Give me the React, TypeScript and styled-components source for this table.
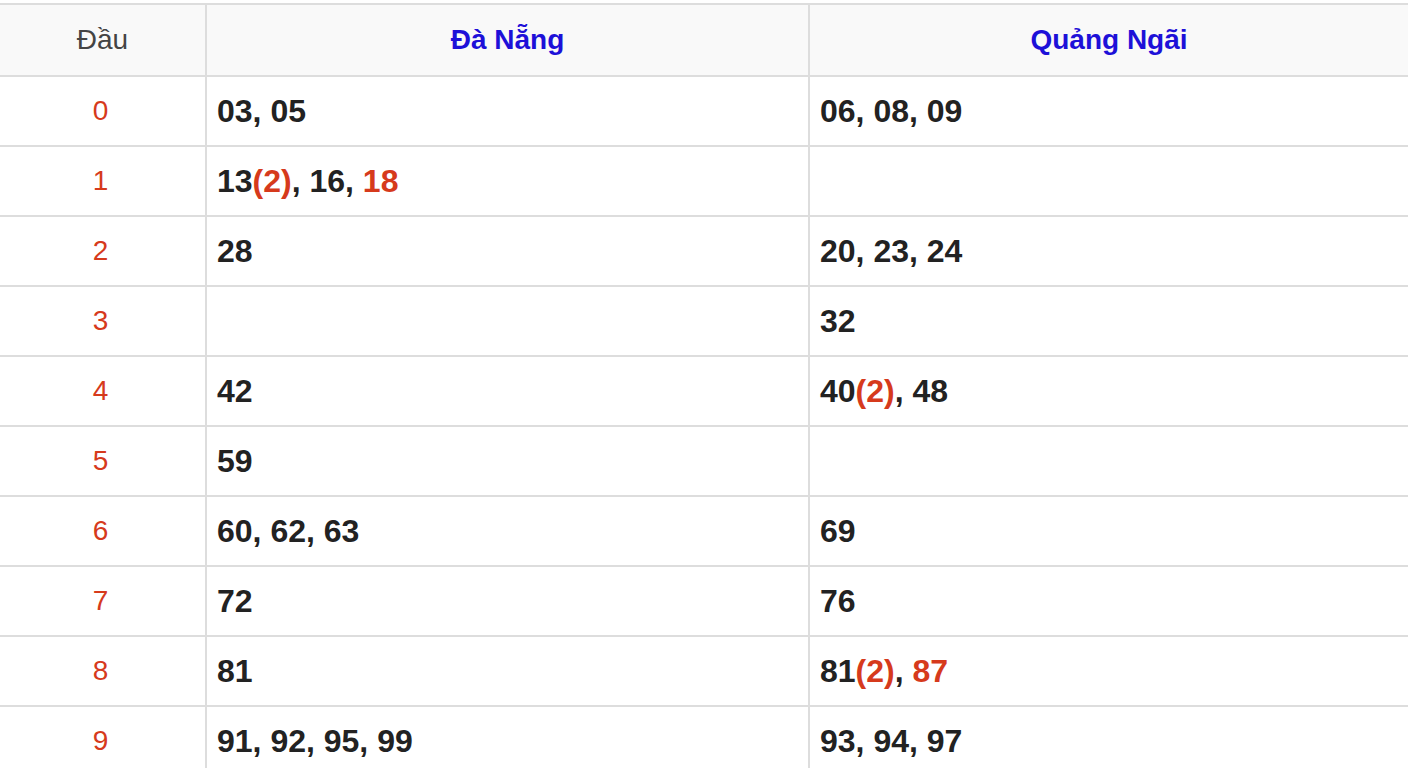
import React from "react";
import styled, { createGlobalStyle } from "styled-components";

const GlobalStyle = createGlobalStyle`
  html, body {
    margin: 0;
    padding: 0;
    background: #ffffff;
    font-family: "Liberation Sans", Arial, Helvetica, sans-serif;
  }
  *, *::before, *::after {
    box-sizing: border-box;
  }
`;

const Wrapper = styled.div`
  padding-top: 3px;
`;

const Table = styled.div`
  display: grid;
  grid-template-columns: 205px 603px 1fr;
  border-top: 2px solid #dddddd;
  width: 1408px;
`;

const HeadCell = styled.div<{ $first?: boolean; $accent?: boolean }>`
  height: 72px;
  display: flex;
  align-items: center;
  justify-content: center;
  background: #f9f9f9;
  border-bottom: 2px solid #dddddd;
  border-left: ${(p) => (p.$first ? "none" : "2px solid #dddddd")};
  font-size: 28px;
  font-weight: ${(p) => (p.$accent ? 700 : 400)};
  color: ${(p) => (p.$accent ? "#1d10d8" : "#444444")};
`;

const IndexCell = styled.div`
  height: 70px;
  display: flex;
  align-items: center;
  justify-content: center;
  border-bottom: 2px solid #dddddd;
  font-size: 28px;
  color: #d63a1c;
  padding-right: 4px;
`;

const NumCell = styled.div`
  height: 70px;
  display: flex;
  align-items: center;
  padding-left: 10px;
  border-left: 2px solid #dddddd;
  border-bottom: 2px solid #dddddd;
  font-size: 32px;
  font-weight: 700;
  color: #222222;
  white-space: pre;
`;

const Hot = styled.span`
  color: #d63a1c;
`;

type Item = { n: string; count?: number; hot?: boolean };

const rows: { head: number; dn: Item[]; qn: Item[] }[] = [
  { head: 0, dn: [{ n: "03" }, { n: "05" }], qn: [{ n: "06" }, { n: "08" }, { n: "09" }] },
  { head: 1, dn: [{ n: "13", count: 2 }, { n: "16" }, { n: "18", hot: true }], qn: [] },
  { head: 2, dn: [{ n: "28" }], qn: [{ n: "20" }, { n: "23" }, { n: "24" }] },
  { head: 3, dn: [], qn: [{ n: "32" }] },
  { head: 4, dn: [{ n: "42" }], qn: [{ n: "40", count: 2 }, { n: "48" }] },
  { head: 5, dn: [{ n: "59" }], qn: [] },
  { head: 6, dn: [{ n: "60" }, { n: "62" }, { n: "63" }], qn: [{ n: "69" }] },
  { head: 7, dn: [{ n: "72" }], qn: [{ n: "76" }] },
  { head: 8, dn: [{ n: "81" }], qn: [{ n: "81", count: 2 }, { n: "87", hot: true }] },
  { head: 9, dn: [{ n: "91" }, { n: "92" }, { n: "95" }, { n: "99" }], qn: [{ n: "93" }, { n: "94" }, { n: "97" }] },
];

const Numbers: React.FC<{ items: Item[] }> = ({ items }) => (
  <>
    {items.map((it, i) => (
      <React.Fragment key={i}>
        {i > 0 ? ", " : ""}
        {it.hot ? <Hot>{it.n}</Hot> : it.n}
        {it.count ? <Hot>({it.count})</Hot> : null}
      </React.Fragment>
    ))}
  </>
);

export default function App() {
  return (
    <Wrapper>
      <GlobalStyle />
      <Table>
        <HeadCell $first>Đầu</HeadCell>
        <HeadCell $accent>Đà Nẵng</HeadCell>
        <HeadCell $accent>Quảng Ngãi</HeadCell>
        {rows.map((r) => (
          <React.Fragment key={r.head}>
            <IndexCell>{r.head}</IndexCell>
            <NumCell>
              <Numbers items={r.dn} />
            </NumCell>
            <NumCell>
              <Numbers items={r.qn} />
            </NumCell>
          </React.Fragment>
        ))}
      </Table>
    </Wrapper>
  );
}
